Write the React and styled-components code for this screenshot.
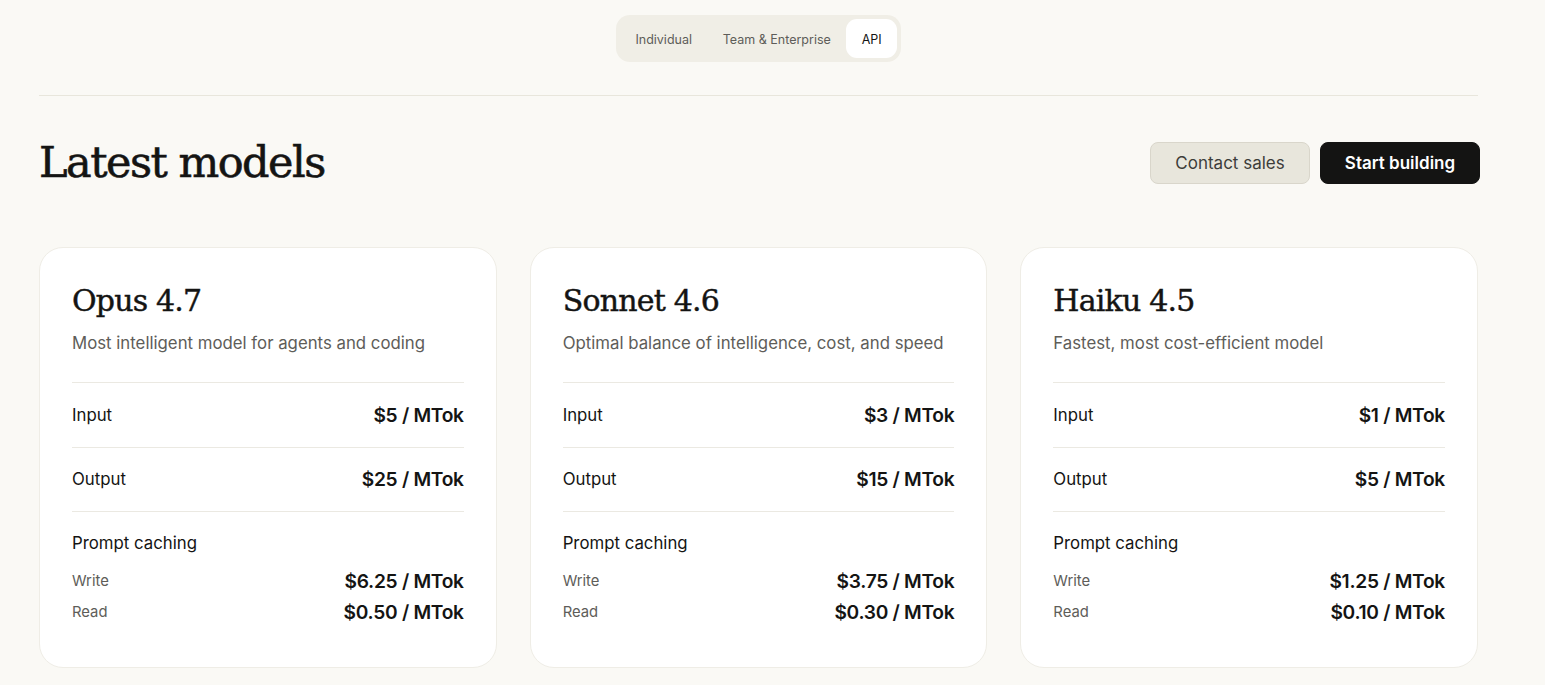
import React from "react";
import styled, { createGlobalStyle } from "styled-components";

const Global = createGlobalStyle`
  html, body { margin: 0; padding: 0; background: #faf9f5; }
  body { font-family: Inter, "Noto Sans", sans-serif; color: #141413; -webkit-font-smoothing: antialiased; }
  * { box-sizing: border-box; }
`;

const Page = styled.div`
  max-width: 1517px;
  padding: 15px 39px 40px;
`;

const TabBar = styled.div`
  display: flex;
  justify-content: center;
  padding-bottom: 33px;
  border-bottom: 1px solid #e8e6dc;
`;

const Tabs = styled.div`
  display: flex;
  align-items: center;
  padding: 4px;
  background: #f0eee6;
  border-radius: 14px;
`;

const Tab = styled.button`
  border: none;
  font-family: Inter, sans-serif;
  font-size: 12.5px;
  height: 39px;
  padding: 2px 15.4px 0;
  border-radius: 11px;
  background: ${(p) => (p.$active ? "#ffffff" : "transparent")};
  color: ${(p) => (p.$active ? "#141413" : "#5e5d59")};
  cursor: pointer;
`;

const Header = styled.div`
  display: flex;
  align-items: center;
  justify-content: space-between;
  padding-top: 46px;
  height: 109px;
  margin-top: -11px;
  margin-bottom: 53px;
`;

const Title = styled.h1`
  margin: 0;
  font-family: "DejaVu Serif", "Liberation Serif", serif;
  font-weight: 400;
  font-size: 43px;
  letter-spacing: -1.5px;
  line-height: 1;
  color: #141413;
  -webkit-text-stroke: 0.6px #141413;
`;

const Actions = styled.div`
  display: flex;
  gap: 10px;
  margin-right: -2px;
`;

const Button = styled.button`
  width: 160px;
  height: 42px;
  border-radius: 8px;
  font-family: Inter, sans-serif;
  font-size: 17px;
  font-weight: ${(p) => (p.$primary ? 600 : 400)};
  border: 1px solid ${(p) => (p.$primary ? "#141413" : "#d9d6cb")};
  background: ${(p) => (p.$primary ? "#141413" : "#e8e6dc")};
  color: ${(p) => (p.$primary ? "#ffffff" : "#3d3d3a")};
  cursor: pointer;
`;

const Cards = styled.div`
  display: grid;
  grid-template-columns: repeat(3, 1fr);
  gap: 33px;
`;

const Card = styled.div`
  background: #ffffff;
  border: 1px solid #efede6;
  border-radius: 24px;
  padding: 34px 32px 40px 32px;
`;

const ModelName = styled.h2`
  margin: 0;
  font-family: "DejaVu Serif", "Liberation Serif", serif;
  font-weight: 400;
  font-size: 30px;
  letter-spacing: -0.8px;
  line-height: 38px;
  color: #141413;
  -webkit-text-stroke: 0.45px #141413;
`;

const Desc = styled.p`
  margin: 10px 0 0;
  font-size: 16.8px;
  line-height: 26px;
  color: #5e5d59;
  padding-bottom: 26px;
  border-bottom: 1px solid #ebe9e2;
`;

const Row = styled.div`
  display: flex;
  justify-content: space-between;
  align-items: center;
  height: 64.5px;
  border-bottom: 1px solid #ebe9e2;
`;

const Label = styled.span`
  font-size: 16.8px;
  color: #141413;
`;

const Price = styled.span`
  font-size: 19.2px;
  font-weight: 600;
  letter-spacing: -0.3px;
  color: #141413;
`;

const Caching = styled.div`
  padding-top: 20px;
`;

const CachingLabel = styled.div`
  font-size: 16.8px;
  line-height: 22px;
  margin-bottom: 12px;
`;

const SubRow = styled.div`
  display: flex;
  justify-content: space-between;
  align-items: center;
  height: 30.5px;
`;

const SubLabel = styled.span`
  font-size: 14.8px;
  color: #5e5d59;
`;

const models = [
  { name: "Opus 4.7", desc: "Most intelligent model for agents and coding", input: "$5", output: "$25", write: "$6.25", read: "$0.50" },
  { name: "Sonnet 4.6", desc: "Optimal balance of intelligence, cost, and speed", input: "$3", output: "$15", write: "$3.75", read: "$0.30" },
  { name: "Haiku 4.5", desc: "Fastest, most cost-efficient model", input: "$1", output: "$5", write: "$1.25", read: "$0.10" },
];

export default function App() {
  return (
    <>
      <Global />
      <Page>
        <TabBar>
          <Tabs>
            <Tab>Individual</Tab>
            <Tab>Team &amp; Enterprise</Tab>
            <Tab $active>API</Tab>
          </Tabs>
        </TabBar>
        <Header>
          <Title>Latest models</Title>
          <Actions>
            <Button>Contact sales</Button>
            <Button $primary>Start building</Button>
          </Actions>
        </Header>
        <Cards>
          {models.map((m) => (
            <Card key={m.name}>
              <ModelName>{m.name}</ModelName>
              <Desc>{m.desc}</Desc>
              <Row>
                <Label>Input</Label>
                <Price>{m.input} / MTok</Price>
              </Row>
              <Row>
                <Label>Output</Label>
                <Price>{m.output} / MTok</Price>
              </Row>
              <Caching>
                <CachingLabel>Prompt caching</CachingLabel>
                <SubRow>
                  <SubLabel>Write</SubLabel>
                  <Price>{m.write} / MTok</Price>
                </SubRow>
                <SubRow>
                  <SubLabel>Read</SubLabel>
                  <Price>{m.read} / MTok</Price>
                </SubRow>
              </Caching>
            </Card>
          ))}
        </Cards>
      </Page>
    </>
  );
}
